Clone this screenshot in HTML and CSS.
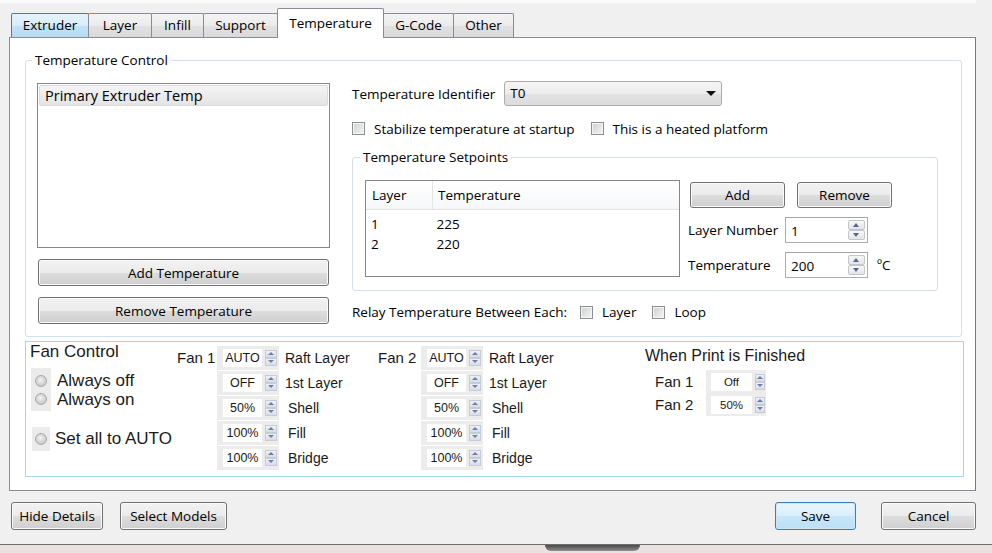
FILE: index.html
```html
<!DOCTYPE html>
<html lang="en">

<head>
    <meta charset="UTF-8">
    <title>Print Settings - Temperature</title>
    <link rel="stylesheet" href="styles.css">
</head>

<body>
    <div class="window">
        <div class="topline"></div>

        <div class="tabs">
            <div class="tab tab-hover w-extruder">Extruder</div>
            <div class="tab w-layer">Layer</div>
            <div class="tab w-infill">Infill</div>
            <div class="tab w-support">Support</div>
            <div class="tab tab-active w-temperature">Temperature</div>
            <div class="tab w-gcode">G-Code</div>
            <div class="tab w-other">Other</div>
        </div>

        <div class="panel">
            <fieldset class="group temp-control">
                <legend>Temperature Control</legend>
                <div class="tc-body">
                    <div class="left-col">
                        <div class="list">
                            <div class="list-item">Primary Extruder Temp</div>
                        </div>
                        <button class="btn wide">Add Temperature</button>
                        <button class="btn wide">Remove Temperature</button>
                    </div>

                    <div class="right-col">
                        <div class="ident-row">
                            <span>Temperature Identifier</span>
                            <div class="combo">T0<span class="caret"></span></div>
                        </div>

                        <div class="check-row">
                            <span class="checkbox"></span>
                            <span class="check-label">Stabilize temperature at startup</span>
                            <span class="checkbox gap-l"></span>
                            <span class="check-label">This is a heated platform</span>
                        </div>

                        <fieldset class="group setpoints">
                            <legend>Temperature Setpoints</legend>
                            <div class="sp-body">
                                <div class="sp-list">
                                    <table class="sp-table">
                                        <thead>
                                            <tr><th class="col-layer">Layer</th><th class="col-temp">Temperature</th></tr>
                                        </thead>
                                        <tbody>
                                            <tr><td class="col-layer">1</td><td class="col-temp">225</td></tr>
                                            <tr><td class="col-layer">2</td><td class="col-temp">220</td></tr>
                                        </tbody>
                                    </table>
                                </div>

                                <div class="sp-side">
                                    <div class="sp-buttons">
                                        <button class="btn small">Add</button>
                                        <button class="btn small">Remove</button>
                                    </div>
                                    <div class="sp-field">
                                        <span class="sp-label">Layer Number</span>
                                        <div class="spin">1<span class="spin-arrows"><i class="up"></i><i class="down"></i></span></div>
                                    </div>
                                    <div class="sp-field">
                                        <span class="sp-label">Temperature</span>
                                        <div class="spin">200<span class="spin-arrows"><i class="up"></i><i class="down"></i></span></div>
                                        <span class="unit">ºC</span>
                                    </div>
                                </div>
                            </div>
                        </fieldset>

                        <div class="check-row relay-row">
                            <span>Relay Temperature Between Each:</span>
                            <span class="checkbox relay-first"></span>
                            <span class="check-label">Layer</span>
                            <span class="checkbox relay-second"></span>
                            <span class="check-label">Loop</span>
                        </div>
                    </div>
                </div>
            </fieldset>

            <div class="fan-box">
                <div class="fan-main">
                    <div class="fan-title">Fan Control</div>
                    <div class="radio-pair">
                        <div class="radio-well">
                            <span class="radio"></span>
                            <span class="radio"></span>
                        </div>
                        <div class="radio-labels">
                            <span>Always off</span>
                            <span>Always on</span>
                        </div>
                    </div>
                    <div class="radio-single">
                        <div class="radio-well single">
                            <span class="radio"></span>
                        </div>
                        <span class="radio-text">Set all to AUTO</span>
                    </div>
                </div>

                <div class="fan-col fan-col-1">
                    <div class="fan-name">Fan 1</div>
                    <div class="fan-rows">
                        <div class="fan-row"><div class="fspin"><span class="fval">AUTO</span><span class="farrows"><i class="up"></i><i class="down"></i></span></div><span>Raft Layer</span></div>
                        <div class="fan-row"><div class="fspin"><span class="fval">OFF</span><span class="farrows"><i class="up"></i><i class="down"></i></span></div><span>1st Layer</span></div>
                        <div class="fan-row"><div class="fspin"><span class="fval">50%</span><span class="farrows"><i class="up"></i><i class="down"></i></span></div><span class="shift">Shell</span></div>
                        <div class="fan-row"><div class="fspin"><span class="fval">100%</span><span class="farrows"><i class="up"></i><i class="down"></i></span></div><span class="shift">Fill</span></div>
                        <div class="fan-row"><div class="fspin"><span class="fval">100%</span><span class="farrows"><i class="up"></i><i class="down"></i></span></div><span class="shift">Bridge</span></div>
                    </div>
                </div>

                <div class="fan-col fan-col-2">
                    <div class="fan-name">Fan 2</div>
                    <div class="fan-rows">
                        <div class="fan-row"><div class="fspin"><span class="fval">AUTO</span><span class="farrows"><i class="up"></i><i class="down"></i></span></div><span>Raft Layer</span></div>
                        <div class="fan-row"><div class="fspin"><span class="fval">OFF</span><span class="farrows"><i class="up"></i><i class="down"></i></span></div><span>1st Layer</span></div>
                        <div class="fan-row"><div class="fspin"><span class="fval">50%</span><span class="farrows"><i class="up"></i><i class="down"></i></span></div><span class="shift">Shell</span></div>
                        <div class="fan-row"><div class="fspin"><span class="fval">100%</span><span class="farrows"><i class="up"></i><i class="down"></i></span></div><span class="shift">Fill</span></div>
                        <div class="fan-row"><div class="fspin"><span class="fval">100%</span><span class="farrows"><i class="up"></i><i class="down"></i></span></div><span class="shift">Bridge</span></div>
                    </div>
                </div>

                <div class="fan-finish">
                    <div class="finish-title">When Print is Finished</div>
                    <div class="finish-row">
                        <span class="finish-name">Fan 1</span>
                        <div class="fspin end"><span class="fval">Off</span><span class="farrows"><i class="up"></i><i class="down"></i></span></div>
                    </div>
                    <div class="finish-row">
                        <span class="finish-name">Fan 2</span>
                        <div class="fspin end"><span class="fval">50%</span><span class="farrows"><i class="up"></i><i class="down"></i></span></div>
                    </div>
                </div>
            </div>
        </div>

        <div class="footer">
            <button class="btn foot">Hide Details</button>
            <button class="btn foot models">Select Models</button>
            <div class="spacer"></div>
            <button class="btn foot save">Save</button>
            <button class="btn foot cancel">Cancel</button>
        </div>

        <div class="taskbar">
            <div class="task-thumb"></div>
        </div>
    </div>
</body>

</html>
```

FILE: styles.css
```css
body {
    margin: 0;
    background-color: #f0f0f0;
    font-family: "Open Sans", "Liberation Sans", sans-serif;
    font-size: 13.5px;
    color: #000;
}

.window {
    width: 992px;
    height: 553px;
    display: flex;
    flex-direction: column;
    overflow: hidden;
}

.topline {
    width: 976px;
    height: 3px;
    background-color: #fbfbfb;
}

/* tab strip */

.tabs {
    display: flex;
    align-items: flex-end;
    height: 34px;
    padding-left: 11px;
}

.tab {
    box-sizing: border-box;
    height: 24px;
    margin-right: -1px;
    border: 1px solid #898c95;
    border-bottom: none;
    border-radius: 2px 2px 0 0;
    background: linear-gradient(#f4f4f4, #ebebeb 50%, #e1e1e1 51%, #dadada);
    text-align: center;
    line-height: 23px;
}

.tab-hover {
    border-color: #3c7fb1;
    background: linear-gradient(#e6f3fb, #d7ecf9 50%, #c2e2f5 51%, #b5dcf3);
}

.tab-active {
    position: relative;
    z-index: 1;
    height: 30px;
    margin-bottom: -1px;
    background: #fff;
    line-height: 29px;
}

.w-extruder { width: 78px; }
.w-layer { width: 64px; }
.w-infill { width: 53px; }
.w-support { width: 75px; }
.w-temperature { width: 107px; }
.w-gcode { width: 71px; }
.w-other { width: 61px; }

/* main panel */

.panel {
    box-sizing: border-box;
    width: 967px;
    height: 454px;
    margin-left: 9px;
    padding-top: 13px;
    border: 1px solid #898c95;
    border-right-color: #7a7a7a;
    background-color: #fff;
}

.group {
    box-sizing: border-box;
    margin: 0;
    border: 1px solid #d5dfe5;
    border-radius: 3px;
    min-width: 0;
}

.group legend {
    margin-left: -5px;
    padding: 0 3px;
    line-height: 18px;
}

.temp-control {
    width: 937px;
    margin-left: 15px;
    padding: 12px 11px 12px 11px;
}

.tc-body {
    display: flex;
}

.left-col {
    width: 293px;
    padding-top: 2px;
}

.list {
    box-sizing: border-box;
    height: 165px;
    border: 1px solid #828790;
    padding: 1px;
}

.list-item {
    box-sizing: border-box;
    height: 21px;
    padding-left: 5px;
    border: 1px solid #dadada;
    border-radius: 2px;
    background: linear-gradient(#f4f4f4, #e4e4e4);
    font-size: 14.5px;
    line-height: 19px;
}

.btn {
    box-sizing: border-box;
    border: 1px solid #707070;
    border-radius: 3px;
    background: linear-gradient(#f2f2f2, #ebebeb 50%, #dddddd 51%, #cfcfcf);
    box-shadow: inset 0 0 0 1px #fbfbfb;
    font-family: inherit;
    font-size: 13.5px;
    color: #000;
    padding: 0;
}

.btn.wide {
    display: block;
    width: 291px;
    height: 27px;
    margin: 11px 0 0 1px;
}

.right-col {
    width: 586px;
    margin-left: 22px;
}

.ident-row {
    display: flex;
    align-items: center;
    height: 25px;
}

.combo {
    position: relative;
    box-sizing: border-box;
    width: 218px;
    height: 25px;
    margin-left: 9px;
    padding-left: 5px;
    border: 1px solid #acacac;
    border-radius: 3px;
    background: linear-gradient(#f5f5f5, #ececec 50%, #e2e2e2 51%, #dcdcdc);
    line-height: 23px;
}

.caret {
    position: absolute;
    right: 5px;
    top: 9px;
    border-left: 5px solid transparent;
    border-right: 5px solid transparent;
    border-top: 5px solid #111;
}

.check-row {
    display: flex;
    align-items: center;
    height: 13px;
    margin-top: 16px;
}

.checkbox {
    box-sizing: border-box;
    width: 13px;
    height: 13px;
    border: 1px solid #8e8f8f;
    background: linear-gradient(135deg, #cdd0d4, #f4f4f4);
    box-shadow: inset 0 0 0 1px #f4f4f4;
}

.check-label {
    margin-left: 9px;
}

.checkbox.gap-l {
    margin-left: 16px;
}

/* setpoints */

.setpoints {
    width: 586px;
    margin-top: 13px;
    padding: 14px 12px 12px 12px;
}

.sp-body {
    display: flex;
}

.sp-list {
    box-sizing: border-box;
    width: 315px;
    height: 97px;
    border: 1px solid #828790;
    background-color: #fff;
}

.sp-table {
    width: 100%;
    border-collapse: collapse;
}

.sp-table th {
    height: 28px;
    padding: 0;
    font-weight: normal;
    text-align: left;
    border-bottom: 1px solid #e3e3e3;
    background: linear-gradient(#ffffff, #f6f7f9);
}

.sp-table th.col-layer {
    width: 60px;
    padding-left: 6px;
    border-right: 1px solid #e3e5e8;
}

.sp-table th.col-temp {
    padding-left: 5px;
}

.sp-table td {
    height: 20px;
    padding: 0;
    line-height: 20px;
    vertical-align: bottom;
}

.sp-table tbody tr:first-child td {
    height: 24px;
}

.sp-table td.col-layer {
    padding-left: 5px;
}

.sp-table td.col-temp {
    padding-left: 4px;
}

.sp-side {
    margin-left: 8px;
}

.sp-buttons {
    display: flex;
    margin: 2px 0 0 2px;
}

.btn.small {
    width: 95px;
    height: 26px;
}

.btn.small + .btn.small {
    margin-left: 12px;
}

.sp-field {
    display: flex;
    align-items: center;
    height: 26px;
    margin-top: 9px;
}

.sp-label {
    width: 97px;
}

.spin {
    position: relative;
    box-sizing: border-box;
    width: 83px;
    height: 26px;
    padding: 3px 0 0 5px;
    border: 1px solid #abadb3;
    border-top-color: #a3a5ab;
    background-color: #fff;
    line-height: 20px;
}

.spin-arrows {
    position: absolute;
    right: 2px;
    top: 2px;
    display: flex;
    flex-direction: column;
    width: 17px;
    height: 20px;
}

.spin-arrows i {
    flex: 1;
    position: relative;
    border: 1px solid #c2c5ca;
    border-radius: 2px;
    background: linear-gradient(#f7f7f7, #e3e5e9);
}

.spin-arrows i::after {
    content: "";
    position: absolute;
    left: 4px;
    top: 2px;
    border-left: 3.5px solid transparent;
    border-right: 3.5px solid transparent;
}

.spin-arrows i.up::after {
    border-bottom: 4px solid #56688e;
}

.spin-arrows i.down::after {
    border-top: 4px solid #56688e;
}

.unit {
    margin-left: 9px;
}

.relay-row {
    height: 16px;
    margin-top: 13px;
}

.checkbox.relay-first {
    margin-left: 13px;
}

.checkbox.relay-second {
    margin-left: 16px;
}

/* fan control */

.fan-box {
    box-sizing: border-box;
    display: flex;
    width: 939px;
    height: 136px;
    margin: 4px 0 0 15px;
    border: 1px solid #a9d3ea;
    font-family: "Liberation Sans", Arial, sans-serif;
    color: #1a1a1a;
}

.fan-main {
    width: 147px;
    padding-left: 4px;
}

.fan-title {
    font-size: 17px;
    line-height: 20px;
}

.radio-pair {
    display: flex;
    margin-top: 6px;
}

.radio-well {
    display: flex;
    flex-direction: column;
    align-items: center;
    gap: 6px;
    width: 20px;
    padding: 7px 0 6px;
    margin-left: 1px;
    background-color: #ebebeb;
}

.radio-well.single {
    width: 18px;
    padding: 6px 0;
    margin-left: 2px;
}

.radio {
    box-sizing: border-box;
    width: 12px;
    height: 12px;
    border: 1px solid #a9a9a9;
    border-radius: 50%;
    background: radial-gradient(circle at 45% 40%, #f2f2f2, #d0d0d0 60%, #bdbdbd);
}

.radio-labels {
    display: flex;
    flex-direction: column;
    margin-left: 6px;
    padding-top: 3px;
    font-size: 17px;
    line-height: 19px;
}

.radio-single {
    display: flex;
    align-items: center;
    margin-top: 16px;
}

.radio-text {
    margin-left: 5px;
    font-size: 17px;
}

.fan-col {
    display: flex;
}

.fan-col-1 {
    width: 201px;
}

.fan-col-2 {
    width: 267px;
}

.fan-name {
    width: 40px;
    margin-top: 4px;
    font-size: 15px;
    line-height: 24px;
}

.fan-col-2 .fan-name {
    width: 43px;
}

.fan-rows {
    display: flex;
    flex-direction: column;
    gap: 1px;
    margin-top: 4px;
}

.fan-row {
    display: flex;
    align-items: center;
    height: 24px;
    font-size: 14px;
}

.fan-row > span {
    margin-left: 6px;
}

.fan-row > span.shift {
    margin-left: 9px;
}

.fspin {
    box-sizing: border-box;
    display: flex;
    align-items: center;
    width: 62px;
    height: 24px;
    padding: 3px 2px 3px 6px;
    background-color: #ececec;
}

.fval {
    width: 39px;
    height: 18px;
    background-color: #fff;
    text-align: center;
    font-size: 12.5px;
    line-height: 18px;
}

.farrows {
    display: flex;
    flex-direction: column;
    width: 12px;
    height: 16px;
    margin-left: 3px;
}

.farrows i {
    flex: 1;
    position: relative;
    background: linear-gradient(#eef1f7, #d7dce6);
    border: 1px solid #c6cbd4;
}

.farrows i::after {
    content: "";
    position: absolute;
    left: 2px;
    top: 1px;
    border-left: 3px solid transparent;
    border-right: 3px solid transparent;
}

.farrows i.up::after {
    border-bottom: 3px solid #6b7fa8;
}

.farrows i.down::after {
    border-top: 3px solid #6b7fa8;
}

.fan-finish {
    padding-top: 4px;
}

.finish-title {
    margin-bottom: 4px;
    font-size: 16px;
    line-height: 20px;
}

.finish-row {
    display: flex;
    align-items: center;
    height: 23px;
    padding-left: 10px;
}

.finish-name {
    width: 51px;
    font-size: 15px;
}

.fspin.end {
    width: 60px;
    height: 23px;
    padding: 3px 1px 3px 5px;
}

.fspin.end .fval {
    width: 41px;
    font-size: 11.5px;
}

.fspin.end .farrows {
    width: 10px;
    margin-left: 3px;
}

.fspin.end .farrows i::after {
    left: 1px;
}

/* footer */

.footer {
    display: flex;
    height: 53px;
    padding: 11px 16px 0 11px;
    box-sizing: border-box;
}

.btn.foot {
    height: 28px;
    width: 92px;
}

.btn.models {
    width: 107px;
    margin-left: 17px;
}

.spacer {
    flex: 1;
}

.btn.save {
    width: 81px;
    border-color: #3c7fb1;
    background: linear-gradient(#e9f5fc, #d9eefb 50%, #c7e6f8 51%, #bde0f5);
    box-shadow: inset 0 0 0 1px #cde9f8;
}

.btn.cancel {
    width: 95px;
    margin-left: 25px;
}

.taskbar {
    height: 9px;
    border-top: 1px solid #6e6e6e;
    background-color: #ebe1e1;
    box-sizing: border-box;
}

.task-thumb {
    width: 95px;
    height: 6px;
    margin-left: 545px;
    border-radius: 0 0 8px 8px;
    background: linear-gradient(#4a4a4a, #8d8d8d);
}
```
